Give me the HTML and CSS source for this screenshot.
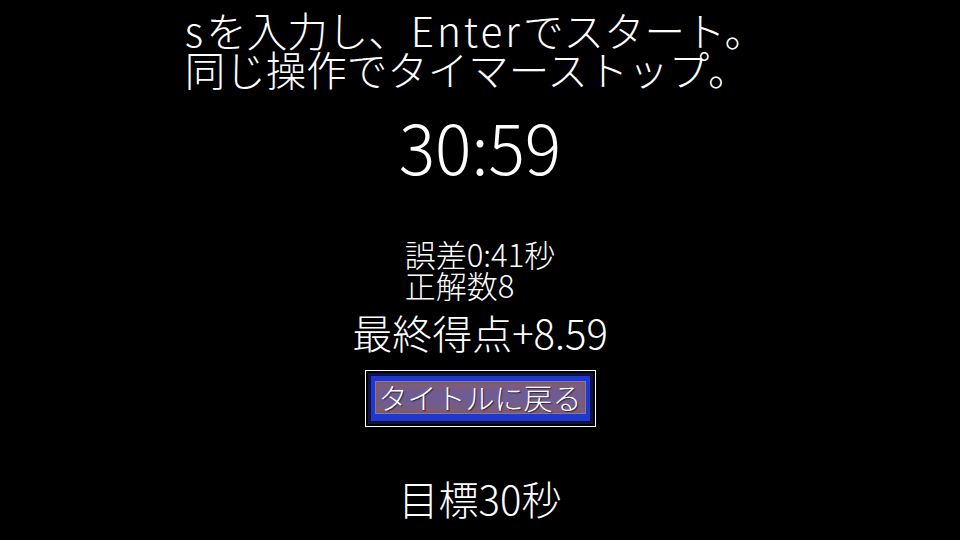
FILE: index.html
```html
<!DOCTYPE html>
<html lang="ja">
<head>
<meta charset="utf-8">
<link rel="stylesheet" href="styles.css">
</head>
<body>
<main class="screen">
  <div class="intro">
    <div class="line">s<span class="gap">を入力し、</span><span class="latin">Enter</span>でスタート。</div>
    <div class="line">同じ操作でタイマーストップ。</div>
  </div>
  <div class="timer">30:59</div>
  <div class="stats">
    <div class="stat">誤差0:41秒</div>
    <div class="stat">正解数8</div>
  </div>
  <div class="score">最終得点+8.59</div>
  <div class="btn-outer">
    <div class="btn-navy">
      <div class="btn-blue">
        <div class="btn-light">
          <div class="btn-face">タイトルに戻る</div>
        </div>
      </div>
    </div>
  </div>
  <div class="goal">目標30秒</div>
</main>
</body>
</html>
```
FILE: styles.css
```css
html, body {
  margin: 0;
  padding: 0;
  background: #000;
}
body {
  width: 960px;
  height: 540px;
  overflow: hidden;
  font-family: "Noto Sans CJK JP", "Noto Sans", sans-serif;
  font-weight: 300;
  color: #fff;
}
.screen {
  width: 960px;
  height: 540px;
  display: flex;
  flex-direction: column;
  align-items: center;
}
.intro {
  margin-top: 10px;
  margin-right: 10px;
  font-size: 40.5px;
  line-height: 39px;
  text-align: left;
  white-space: nowrap;
}
.latin {
  letter-spacing: 3px;
  padding-left: 2px;
}
.gap {
  padding-left: 3px;
}
.timer {
  margin-top: 25px;
  font-size: 68px;
  line-height: 66px;
}
.stats {
  margin-top: 59px;
  font-size: 31px;
  line-height: 31px;
  text-align: left;
}
.score {
  margin-top: 12px;
  font-size: 40px;
  line-height: 40px;
}
.btn-outer {
  margin-top: 18px;
  border: 1px solid #fff;
  padding: 2px;
  background: #000;
}
.btn-navy {
  border: 3px solid #0c1244;
}
.btn-blue {
  background: #2238cc;
  padding: 5px 4px 7px 4px;
}
.btn-light {
  border: 1px solid #6a78e0;
}
.btn-face {
  width: 205px;
  height: 27px;
  border: 2px solid #8a5a4e;
  background: linear-gradient(#7c5c7c, #6c5c98 50%, #7a5c7c);
  font-size: 29px;
  line-height: 27px;
  text-align: center;
  white-space: nowrap;
  text-shadow: 1px 1px 1px rgba(0, 0, 0, 0.6);
}
.goal {
  margin-top: 51px;
  font-size: 40px;
  line-height: 40px;
}
```
